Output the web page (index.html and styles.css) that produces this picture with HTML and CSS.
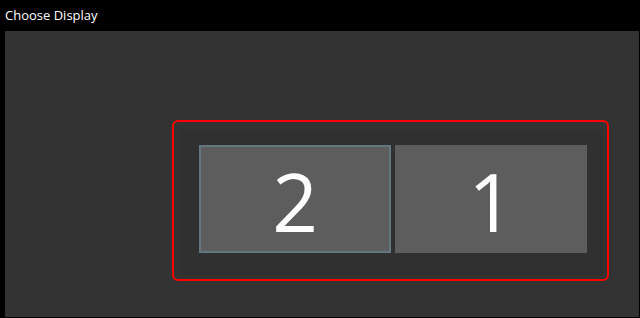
FILE: index.html
```html
<!DOCTYPE html>
<html>
<head>
    <title>Choose Display</title>
    <link rel="stylesheet" href="styles.css">
</head>
<body>
    <div class="titlebar">Choose Display</div>

    <div class="panel">
        <!-- selected layout -->
        <div class="frame">
            <div class="inner">
                <div class="monitor active">2</div>
                <div class="monitor">1</div>
            </div>
        </div>
    </div>
</body>
</html>
```

FILE: styles.css
```css
body {
    margin: 0;
    background: black;
    font-family: "Open Sans", "Noto Sans", sans-serif;
    color: white;
}
.titlebar {
    height: 31px;
    padding-left: 5px;
    font-size: 13px;
    line-height: 31px;
}
.panel {
    margin-left: 5px;
    margin-right: 1px;
    height: 286px;
    background: #333333;
    padding-top: 89px;
    padding-left: 167px;
    box-sizing: border-box;
}
.frame {
    width: 437px;
    height: 161px;
    border: 2px solid #ff0000;
    border-radius: 6px;
    box-sizing: border-box;
    padding: 7px 0 0 6px;
}
.inner {
    width: 423px;
    height: 147px;
    background: #303030;
    border-radius: 3px;
    display: flex;
    gap: 4px;
    padding: 16px 0 0 19px;
    box-sizing: border-box;
}
.monitor {
    width: 192px;
    height: 108px;
    background: #5d5d5d;
    box-sizing: border-box;
    display: flex;
    align-items: center;
    justify-content: center;
    padding-top: 4px;
    font-size: 80px;
    font-weight: 400;
    line-height: 1;
}
.monitor.active {
    border: 2px solid #637780;
}
```
